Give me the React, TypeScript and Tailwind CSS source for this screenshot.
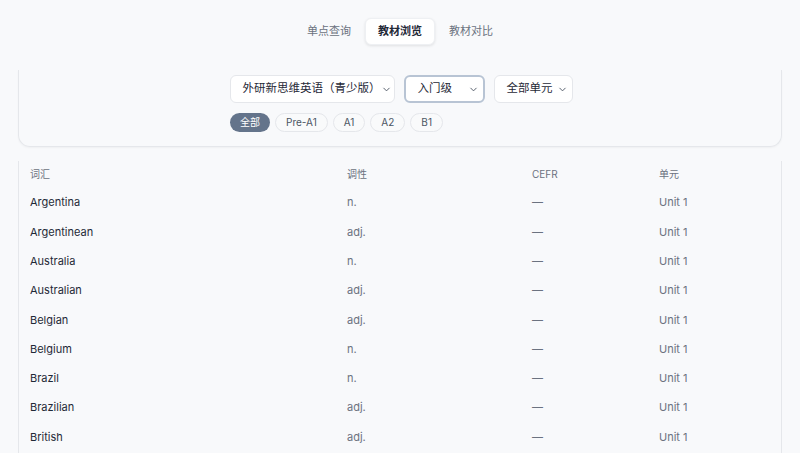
import { ChevronDown } from 'lucide-react';

const rows: [string, string][] = [
  ['Argentina', 'n.'],
  ['Argentinean', 'adj.'],
  ['Australia', 'n.'],
  ['Australian', 'adj.'],
  ['Belgian', 'adj.'],
  ['Belgium', 'n.'],
  ['Brazil', 'n.'],
  ['Brazilian', 'adj.'],
  ['British', 'adj.'],
];

const levels = ['全部', 'Pre-A1', 'A1', 'A2', 'B1'];

function Select({ label, width, focused }: { label: string; width: string; focused?: boolean }) {
  return (
    <div
      className={`${width} h-[28px] shrink-0 rounded-md bg-white flex items-center justify-between pl-3 pr-[4px] text-[11.5px] whitespace-nowrap text-[#1f2937] ${
        focused ? 'border-2 border-[#b8c4d4]' : 'border border-[#e5e7eb]'
      }`}
    >
      <span>{label}</span>
      <ChevronDown size={11} strokeWidth={2} className="text-[#4b5563] shrink-0" />
    </div>
  );
}

export default function App() {
  return (
    <div
      className="w-[800px] h-[453px] overflow-hidden bg-[#f8f9fb] text-[#1f2937]"
      style={{ fontFamily: 'Inter, "Noto Sans CJK SC", sans-serif' }}
    >
      <div className="flex justify-center items-center gap-[2px] pt-[18px] text-[11px]">
        <button className="px-[12px] h-[27px] text-[#6b7280]">单点查询</button>
        <button className="px-[12px] h-[27px] rounded-md bg-white shadow-[0_1px_3px_rgba(0,0,0,0.1)] border border-[#eef0f3] font-semibold text-[#1f2937]">
          教材浏览
        </button>
        <button className="px-[12px] h-[27px] text-[#6b7280]">教材对比</button>
      </div>

      <div className="mx-[18px] mt-[25px] h-[77px] rounded-b-xl border-x border-b border-[#e5e7eb] shadow-[0_1px_2px_rgba(0,0,0,0.04)] pt-[5px]">
        <div className="flex justify-center gap-[9px] pl-[2px]">
          <Select label="外研新思维英语（青少版）" width="w-[165px]" />
          <Select label="入门级" width="w-[81px]" focused />
          <Select label="全部单元" width="w-[79px]" />
        </div>
        <div className="flex gap-[5px] mt-[10px] ml-[211px]">
          {levels.map((l, i) => (
            <span
              key={l}
              className={`h-[19px] px-[10px] rounded-full flex items-center text-[10px] ${
                i === 0
                  ? 'bg-[#64748b] text-white'
                  : 'border border-[#e5e7eb] text-[#4b5563] bg-[#f9fafb]'
              }`}
            >
              {l}
            </span>
          ))}
        </div>
      </div>

      <div className="mx-[18px] mt-[14px] pb-6 border-x border-[#e5e7eb]">
        <div className="grid grid-cols-[317px_185px_127px_1fr] pl-[11px] h-[27px] items-center text-[10px] text-[#6b7280]">
          <span>词汇</span>
          <span>调性</span>
          <span>CEFR</span>
          <span>单元</span>
        </div>
        {rows.map(([w, p]) => (
          <div
            key={w}
            className="grid grid-cols-[317px_185px_127px_1fr] pl-[11px] h-[29.3px] items-center text-[11px]"
          >
            <span className="text-[#1f2937]">{w}</span>
            <span className="text-[#6b7280]">{p}</span>
            <span className="text-[#6b7280]">—</span>
            <span className="text-[#6b7280]">Unit 1</span>
          </div>
        ))}
      </div>
    </div>
  );
}
